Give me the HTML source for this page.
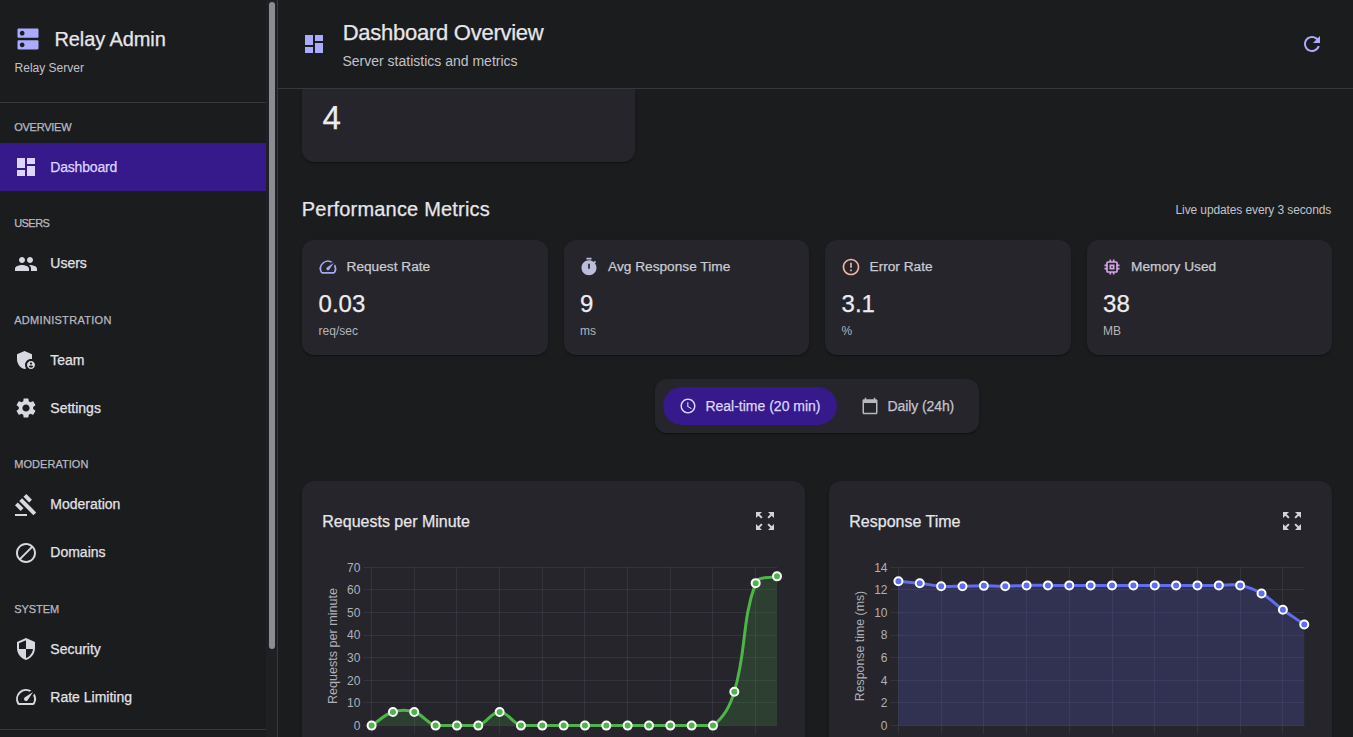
<!DOCTYPE html>
<html><head><meta charset="utf-8"><title>Relay Admin</title>
<style>
html,body{margin:0;padding:0;width:1353px;height:737px;overflow:hidden;background:#1b1c1e;font-family:"Liberation Sans",sans-serif;}
.t{position:absolute;white-space:nowrap;line-height:1;}
.r{position:absolute;}
.i{position:absolute;display:block;overflow:visible;}
.rt{transform:translate(-50%,-50%) rotate(-90deg);}
</style></head><body>
<svg class="i" style="left:14.00px;top:24.70px;width:28px;height:28px" viewBox="0 0 24 24"><path fill="#aaaaff" d="M20 13H4c-.55 0-1 .45-1 1v6c0 .55.45 1 1 1h16c.55 0 1-.45 1-1v-6c0-.55-.45-1-1-1M7 19c-1.1 0-2-.9-2-2s.9-2 2-2 2 .9 2 2-.9 2-2 2M20 3H4c-.55 0-1 .45-1 1v6c0 .55.45 1 1 1h16c.55 0 1-.45 1-1V4c0-.55-.45-1-1-1M7 9c-1.1 0-2-.9-2-2s.9-2 2-2 2 .9 2 2-.9 2-2 2"/></svg>
<div class="t" style="left:54.50px;top:29.32px;font-size:20px;color:#e6e6ea;font-weight:500;letter-spacing:-0.1px;-webkit-text-stroke:0.25px #e6e6ea;">Relay Admin</div>
<div class="t" style="left:14.60px;top:62.09px;font-size:12px;color:#c2c2ca;">Relay Server</div>
<div class="r" style="left:0px;top:102px;width:266px;height:1px;background:#38373f;"></div>
<div class="t" style="left:14.20px;top:121.94px;font-size:11px;color:#b9b9c2;font-weight:500;letter-spacing:-0.25px;-webkit-text-stroke:0.1px #b9b9c2;-webkit-text-stroke:0.25px #b9b9c2;">OVERVIEW</div>
<div class="t" style="left:14.20px;top:217.94px;font-size:11px;color:#b9b9c2;font-weight:500;letter-spacing:-0.5499999999999999px;-webkit-text-stroke:0.1px #b9b9c2;-webkit-text-stroke:0.25px #b9b9c2;">USERS</div>
<div class="t" style="left:14.20px;top:314.94px;font-size:11px;color:#b9b9c2;font-weight:500;letter-spacing:0.3px;-webkit-text-stroke:0.1px #b9b9c2;-webkit-text-stroke:0.25px #b9b9c2;">ADMINISTRATION</div>
<div class="t" style="left:14.20px;top:458.94px;font-size:11px;color:#b9b9c2;font-weight:500;letter-spacing:0.05px;-webkit-text-stroke:0.1px #b9b9c2;-webkit-text-stroke:0.25px #b9b9c2;">MODERATION</div>
<div class="t" style="left:14.20px;top:603.94px;font-size:11px;color:#b9b9c2;font-weight:500;letter-spacing:-0.05px;-webkit-text-stroke:0.1px #b9b9c2;-webkit-text-stroke:0.25px #b9b9c2;">SYSTEM</div>
<div class="r" style="left:0px;top:143px;width:266px;height:48px;background:#36198a;"></div>
<svg class="i" style="left:14.00px;top:155.00px;width:24px;height:24px" viewBox="0 0 24 24"><path fill="#dcd6ff" d="M3 13h8V3H3zm0 8h8v-6H3zm10 0h8V11h-8zm0-18v6h8V3z"/></svg>
<div class="t" style="left:50.30px;top:160.40px;font-size:14px;color:#dcd6ff;font-weight:500;letter-spacing:-0.19px;-webkit-text-stroke:0.25px #dcd6ff;">Dashboard</div>
<svg class="i" style="left:14.00px;top:252.00px;width:24px;height:24px" viewBox="0 0 24 24"><path fill="#d8d8e0" d="M16 11c1.66 0 2.99-1.34 2.99-3S17.66 5 16 5c-1.66 0-3 1.34-3 3s1.34 3 3 3m-8 0c1.66 0 2.99-1.34 2.99-3S9.66 5 8 5C6.34 5 5 6.34 5 8s1.34 3 3 3m0 2c-2.33 0-7 1.17-7 3.5V19h14v-2.5c0-2.33-4.67-3.5-7-3.5m8 0c-.29 0-.62.02-.97.05 1.16.84 1.97 1.97 1.97 3.45V19h6v-2.5c0-2.33-4.67-3.5-7-3.5"/></svg>
<div class="t" style="left:50.30px;top:256.40px;font-size:14px;color:#e2e2e8;font-weight:500;-webkit-text-stroke:0.25px #e2e2e8;">Users</div>
<svg class="i" style="left:14.00px;top:348.00px;width:24px;height:24px" viewBox="0 0 24 24"><path fill="#d8d8e0" d="M17 11c.34 0 .67.04 1 .09V6.27L10.5 3 3 6.27v4.91c0 4.54 3.2 8.79 7.5 9.82.55-.13 1.08-.32 1.6-.55-.69-.98-1.1-2.17-1.1-3.45 0-3.31 2.69-6 6-6M17 13c-2.21 0-4 1.79-4 4s1.79 4 4 4 4-1.79 4-4-1.79-4-4-4m0 1.38c.62 0 1.12.51 1.12 1.12s-.51 1.12-1.12 1.12-1.12-.51-1.12-1.12.5-1.12 1.12-1.12m0 5.37c-.93 0-1.74-.46-2.24-1.17.05-.72 1.51-1.08 2.24-1.08s2.19.36 2.24 1.08c-.5.71-1.31 1.17-2.24 1.17"/></svg>
<div class="t" style="left:50.30px;top:353.40px;font-size:14px;color:#e2e2e8;font-weight:500;-webkit-text-stroke:0.25px #e2e2e8;">Team</div>
<svg class="i" style="left:14.00px;top:396.00px;width:24px;height:24px" viewBox="0 0 24 24"><path fill="#d8d8e0" d="M19.14 12.94c.04-.3.06-.61.06-.94 0-.32-.02-.64-.07-.94l2.03-1.58c.18-.14.23-.41.12-.61l-1.92-3.32c-.12-.22-.37-.29-.59-.22l-2.39.96c-.5-.38-1.03-.7-1.62-.94l-.36-2.54c-.04-.24-.24-.41-.48-.41h-3.84c-.24 0-.43.17-.47.41l-.36 2.54c-.59.24-1.13.57-1.62.94l-2.39-.96c-.22-.08-.47 0-.59.22L2.74 8.87c-.12.21-.08.47.12.61l2.03 1.58c-.05.3-.09.63-.09.94s.02.64.07.94l-2.03 1.58c-.18.14-.23.41-.12.61l1.92 3.32c.12.22.37.29.59.22l2.39-.96c.5.38 1.03.7 1.62.94l.36 2.54c.05.24.24.41.48.41h3.84c.24 0 .44-.17.47-.41l.36-2.54c.59-.24 1.13-.56 1.62-.94l2.39.96c.22.08.47 0 .59-.22l1.92-3.32c.12-.22.07-.47-.12-.61zM12 15.6c-1.98 0-3.6-1.62-3.6-3.6s1.62-3.6 3.6-3.6 3.6 1.62 3.6 3.6-1.62 3.6-3.6 3.6"/></svg>
<div class="t" style="left:50.30px;top:401.40px;font-size:14px;color:#e2e2e8;font-weight:500;-webkit-text-stroke:0.25px #e2e2e8;">Settings</div>
<svg class="i" style="left:14.00px;top:493.00px;width:24px;height:24px" viewBox="0 0 24 24"><path fill="#d8d8e0" d="M1 21h12v2H1zM5.245 8.07l2.83-2.827 14.14 14.142-2.828 2.828zM12.317 1l5.657 5.656-2.83 2.83-5.654-5.66zM3.825 9.485l5.657 5.657-2.828 2.828-5.657-5.657z"/></svg>
<div class="t" style="left:50.30px;top:497.40px;font-size:14px;color:#e2e2e8;font-weight:500;-webkit-text-stroke:0.25px #e2e2e8;">Moderation</div>
<svg class="i" style="left:14.00px;top:541.00px;width:24px;height:24px" viewBox="0 0 24 24"><path fill="#d8d8e0" d="M12 2C6.48 2 2 6.48 2 12s4.48 10 10 10 10-4.48 10-10S17.52 2 12 2M4 12c0-4.42 3.58-8 8-8 1.85 0 3.55.63 4.9 1.69L5.69 16.9C4.63 15.55 4 13.85 4 12m8 8c-1.85 0-3.55-.63-4.9-1.69L18.31 7.1C19.37 8.45 20 10.15 20 12c0 4.42-3.58 8-8 8"/></svg>
<div class="t" style="left:50.30px;top:545.40px;font-size:14px;color:#e2e2e8;font-weight:500;-webkit-text-stroke:0.25px #e2e2e8;">Domains</div>
<svg class="i" style="left:14.00px;top:637.00px;width:24px;height:24px" viewBox="0 0 24 24"><path fill="#d8d8e0" d="M12 1 3 5v6c0 5.55 3.84 10.74 9 12 5.16-1.26 9-6.45 9-12V5zm0 10.99h7c-.53 4.12-3.28 7.79-7 8.94V12H5V6.3l7-3.11z"/></svg>
<div class="t" style="left:50.30px;top:642.40px;font-size:14px;color:#e2e2e8;font-weight:500;-webkit-text-stroke:0.25px #e2e2e8;">Security</div>
<svg class="i" style="left:14.00px;top:685.00px;width:24px;height:24px" viewBox="0 0 24 24"><path fill="#d8d8e0" d="m20.38 8.57-1.23 1.85a8 8 0 0 1-.22 7.58H5.07A8 8 0 0 1 15.58 6.85l1.85-1.23A10 10 0 0 0 3.35 19a2 2 0 0 0 1.72 1h13.85a2 2 0 0 0 1.74-1 10 10 0 0 0-.27-10.44zm-9.79 6.84a2 2 0 0 0 2.83 0l5.66-8.49-8.49 5.66a2 2 0 0 0 0 2.83"/></svg>
<div class="t" style="left:50.30px;top:690.40px;font-size:14px;color:#e2e2e8;font-weight:500;-webkit-text-stroke:0.25px #e2e2e8;">Rate Limiting</div>
<div class="r" style="left:0px;top:729px;width:266px;height:1px;background:#38373f;"></div>
<div class="r" style="left:266px;top:0px;width:11px;height:737px;background:#202024;"></div>
<div class="r" style="left:269px;top:2px;width:6px;height:647px;background:#8b8b94;border-radius:3px;"></div>
<div class="r" style="left:277px;top:0px;width:1px;height:737px;background:#38373f;"></div>
<div class="r" style="left:302px;top:40px;width:333px;height:122px;background:#25252b;border-radius:12px;box-shadow:0 2px 1px -1px rgba(0,0,0,.2),0 1px 1px 0 rgba(0,0,0,.14),0 1px 3px 0 rgba(0,0,0,.12);"></div>
<div class="t" style="left:322.50px;top:101.31px;font-size:33px;color:#ececf0;font-weight:500;-webkit-text-stroke:0.25px #ececf0;">4</div>
<div class="t" style="left:301.80px;top:199.32px;font-size:20px;color:#e6e6ea;font-weight:500;letter-spacing:0.19px;-webkit-text-stroke:0.25px #e6e6ea;">Performance Metrics</div>
<div class="t" style="right:21.70px;top:204.09px;font-size:12px;color:#c2c2ca;letter-spacing:-0.11px;margin-right:0.11px;">Live updates every 3 seconds</div>
<div class="r" style="left:302px;top:240px;width:245.5px;height:115px;background:#25252b;border-radius:12px;box-shadow:0 2px 1px -1px rgba(0,0,0,.2),0 1px 1px 0 rgba(0,0,0,.14),0 1px 3px 0 rgba(0,0,0,.12);"></div>
<svg class="i" style="left:317.50px;top:257.00px;width:20px;height:20px" viewBox="0 0 24 24"><path fill="#a6a8f2" d="m20.38 8.57-1.23 1.85a8 8 0 0 1-.22 7.58H5.07A8 8 0 0 1 15.58 6.85l1.85-1.23A10 10 0 0 0 3.35 19a2 2 0 0 0 1.72 1h13.85a2 2 0 0 0 1.74-1 10 10 0 0 0-.27-10.44zm-9.79 6.84a2 2 0 0 0 2.83 0l5.66-8.49-8.49 5.66a2 2 0 0 0 0 2.83"/></svg>
<div class="t" style="left:346.50px;top:259.65px;font-size:13.7px;color:#cacad2;font-weight:500;-webkit-text-stroke:0.25px #cacad2;">Request Rate</div>
<div class="t" style="left:318.60px;top:291.93px;font-size:24px;color:#ececf0;font-weight:500;-webkit-text-stroke:0.25px #ececf0;">0.03</div>
<div class="t" style="left:318.60px;top:325.09px;font-size:12px;color:#b4b4bc;">req/sec</div>
<div class="r" style="left:563.5px;top:240px;width:245.5px;height:115px;background:#25252b;border-radius:12px;box-shadow:0 2px 1px -1px rgba(0,0,0,.2),0 1px 1px 0 rgba(0,0,0,.14),0 1px 3px 0 rgba(0,0,0,.12);"></div>
<svg class="i" style="left:579.00px;top:257.00px;width:20px;height:20px" viewBox="0 0 24 24"><path fill="#bcbcdc" d="M9 1h6v2H9zm10.03 6.39 1.42-1.42c-.43-.51-.9-.99-1.41-1.41l-1.42 1.42C16.07 4.74 14.12 4 12 4c-4.97 0-9 4.03-9 9s4.02 9 9 9 9-4.03 9-9c0-2.12-.74-4.07-1.97-5.61M13 14h-2V8h2z"/></svg>
<div class="t" style="left:608.00px;top:259.65px;font-size:13.7px;color:#cacad2;font-weight:500;-webkit-text-stroke:0.25px #cacad2;">Avg Response Time</div>
<div class="t" style="left:580.10px;top:291.93px;font-size:24px;color:#ececf0;font-weight:500;-webkit-text-stroke:0.25px #ececf0;">9</div>
<div class="t" style="left:580.10px;top:325.09px;font-size:12px;color:#b4b4bc;">ms</div>
<div class="r" style="left:825px;top:240px;width:245.5px;height:115px;background:#25252b;border-radius:12px;box-shadow:0 2px 1px -1px rgba(0,0,0,.2),0 1px 1px 0 rgba(0,0,0,.14),0 1px 3px 0 rgba(0,0,0,.12);"></div>
<svg class="i" style="left:840.50px;top:257.00px;width:20px;height:20px" viewBox="0 0 24 24"><path fill="#f0b4a4" d="M11 15h2v2h-2zm0-8h2v6h-2zm.99-5C6.47 2 2 6.48 2 12s4.47 10 9.99 10C17.52 22 22 17.52 22 12S17.52 2 11.99 2M12 20c-4.42 0-8-3.58-8-8s3.58-8 8-8 8 3.58 8 8-3.58 8-8 8"/></svg>
<div class="t" style="left:869.50px;top:259.65px;font-size:13.7px;color:#cacad2;font-weight:500;-webkit-text-stroke:0.25px #cacad2;">Error Rate</div>
<div class="t" style="left:841.60px;top:291.93px;font-size:24px;color:#ececf0;font-weight:500;-webkit-text-stroke:0.25px #ececf0;">3.1</div>
<div class="t" style="left:841.60px;top:325.09px;font-size:12px;color:#b4b4bc;">%</div>
<div class="r" style="left:1086.5px;top:240px;width:245.5px;height:115px;background:#25252b;border-radius:12px;box-shadow:0 2px 1px -1px rgba(0,0,0,.2),0 1px 1px 0 rgba(0,0,0,.14),0 1px 3px 0 rgba(0,0,0,.12);"></div>
<svg class="i" style="left:1102.00px;top:257.00px;width:20px;height:20px" viewBox="0 0 24 24"><path fill="#d6a6e6" d="M15 9H9v6h6zm-2 4h-2v-2h2zm8-2V9h-2V7c0-1.1-.9-2-2-2h-2V3h-2v2h-2V3H9v2H7c-1.1 0-2 .9-2 2v2H3v2h2v2H3v2h2v2c0 1.1.9 2 2 2h2v2h2v-2h2v2h2v-2h2c1.1 0 2-.9 2-2v-2h2v-2h-2v-2zm-4 6H7V7h10z"/></svg>
<div class="t" style="left:1131.00px;top:259.65px;font-size:13.7px;color:#cacad2;font-weight:500;-webkit-text-stroke:0.25px #cacad2;">Memory Used</div>
<div class="t" style="left:1103.10px;top:291.93px;font-size:24px;color:#ececf0;font-weight:500;-webkit-text-stroke:0.25px #ececf0;">38</div>
<div class="t" style="left:1103.10px;top:325.09px;font-size:12px;color:#b4b4bc;">MB</div>
<div class="r" style="left:655px;top:379px;width:324px;height:54px;background:#25252b;border-radius:12px;box-shadow:0 2px 1px -1px rgba(0,0,0,.2),0 1px 1px 0 rgba(0,0,0,.14),0 1px 3px 0 rgba(0,0,0,.12);"></div>
<div class="r" style="left:663px;top:387px;width:174px;height:38px;background:#36198a;border-radius:19px;"></div>
<svg class="i" style="left:679.00px;top:397.00px;width:18px;height:18px" viewBox="0 0 24 24"><path fill="#dcd6ff" d="M11.99 2C6.47 2 2 6.48 2 12s4.47 10 9.99 10C17.52 22 22 17.52 22 12S17.52 2 11.99 2M12 20c-4.42 0-8-3.58-8-8s3.58-8 8-8 8 3.58 8 8-3.58 8-8 8m.5-13H11v6l5.25 3.15.75-1.23-4.5-2.67z"/></svg>
<div class="t" style="left:705.40px;top:399.40px;font-size:14px;color:#dcd6ff;font-weight:500;-webkit-text-stroke:0.25px #dcd6ff;">Real-time (20 min)</div>
<svg class="i" style="left:861.30px;top:397.00px;width:18px;height:18px" viewBox="0 0 24 24"><path fill="#b8b8c0" d="M20 3h-1V1h-2v2H7V1H5v2H4c-1.1 0-2 .9-2 2v16c0 1.1.9 2 2 2h16c1.1 0 2-.9 2-2V5c0-1.1-.9-2-2-2m0 18H4V8h16z"/></svg>
<div class="t" style="left:887.60px;top:399.40px;font-size:14px;color:#c4c4cc;font-weight:500;letter-spacing:-0.1px;-webkit-text-stroke:0.25px #c4c4cc;">Daily (24h)</div>
<div class="r" style="left:302px;top:481px;width:503px;height:299px;background:#25252b;border-radius:12px;box-shadow:0 2px 1px -1px rgba(0,0,0,.2),0 1px 1px 0 rgba(0,0,0,.14),0 1px 3px 0 rgba(0,0,0,.12);"></div>
<div class="t" style="left:322.30px;top:513.70px;font-size:16px;color:#e6e6ea;font-weight:500;-webkit-text-stroke:0.25px #e6e6ea;">Requests per Minute</div>
<svg class="i" style="left:753.00px;top:508.60px;width:24px;height:24px" viewBox="0 0 24 24"><path fill="#d2d2da" d="m15 3 2.3 2.3-2.89 2.87 1.42 1.42L18.7 6.7 21 9V3zM3 9l2.3-2.3 2.87 2.89 1.42-1.42L6.7 5.3 9 3H3zm6 12-2.3-2.3 2.89-2.87-1.42-1.42L5.3 17.3 3 15v6zm12-6-2.3 2.3-2.87-2.89-1.42 1.42 2.89 2.87L15 21h6z"/></svg>
<div class="r" style="left:829px;top:481px;width:503px;height:299px;background:#25252b;border-radius:12px;box-shadow:0 2px 1px -1px rgba(0,0,0,.2),0 1px 1px 0 rgba(0,0,0,.14),0 1px 3px 0 rgba(0,0,0,.12);"></div>
<div class="t" style="left:849.30px;top:513.70px;font-size:16px;color:#e6e6ea;font-weight:500;-webkit-text-stroke:0.25px #e6e6ea;">Response Time</div>
<svg class="i" style="left:1280.00px;top:508.60px;width:24px;height:24px" viewBox="0 0 24 24"><path fill="#d2d2da" d="m15 3 2.3 2.3-2.89 2.87 1.42 1.42L18.7 6.7 21 9V3zM3 9l2.3-2.3 2.87 2.89 1.42-1.42L6.7 5.3 9 3H3zm6 12-2.3-2.3 2.89-2.87-1.42-1.42L5.3 17.3 3 15v6zm12-6-2.3 2.3-2.87-2.89-1.42 1.42 2.89 2.87L15 21h6z"/></svg>
<svg class="i" style="left:0;top:0;width:1353px;height:737px" viewBox="0 0 1353 737"><path d="M363.6,725.5H777.00M363.6,702.5H777.00M363.6,680.5H777.00M363.6,657.5H777.00M363.6,635.5H777.00M363.6,612.5H777.00M363.6,589.5H777.00M363.6,567.5H777.00M371.5,567.30V733.60M414.5,567.30V733.60M456.5,567.30V733.60M499.5,567.30V733.60M542.5,567.30V733.60M584.5,567.30V733.60M627.5,567.30V733.60M670.5,567.30V733.60M712.5,567.30V733.60M755.5,567.30V733.60" stroke="rgba(160,155,205,0.12)" stroke-width="1" fill="none"/><path d="M371.60,725.60C380.13,720.17 383.68,714.97 392.94,712.03C400.75,709.55 406.46,709.55 414.27,712.03C423.53,714.97 426.35,722.66 435.61,725.60C443.42,725.60 448.41,725.60 456.95,725.60C465.48,725.60 470.47,725.60 478.28,725.60C487.54,722.66 491.09,712.03 499.62,712.03C508.16,712.03 511.70,722.66 520.96,725.60C528.77,725.60 533.76,725.60 542.29,725.60C550.83,725.60 555.10,725.60 563.63,725.60C572.17,725.60 576.43,725.60 584.97,725.60C593.50,725.60 597.77,725.60 606.31,725.60C614.84,725.60 619.11,725.60 627.64,725.60C636.18,725.60 640.44,725.60 648.98,725.60C657.51,725.60 661.78,725.60 670.32,725.60C678.85,725.60 683.12,725.60 691.65,725.60C700.19,725.60 707.06,725.60 712.99,725.60C724.13,716.75 729.79,706.83 734.33,691.68C746.86,649.84 741.47,621.50 755.66,583.13C758.54,575.36 768.47,579.06 777.00,576.35L777.00,725.60L371.60,725.60Z" fill="rgba(76,183,72,0.18)"/><path d="M371.60,725.60C380.13,720.17 383.68,714.97 392.94,712.03C400.75,709.55 406.46,709.55 414.27,712.03C423.53,714.97 426.35,722.66 435.61,725.60C443.42,725.60 448.41,725.60 456.95,725.60C465.48,725.60 470.47,725.60 478.28,725.60C487.54,722.66 491.09,712.03 499.62,712.03C508.16,712.03 511.70,722.66 520.96,725.60C528.77,725.60 533.76,725.60 542.29,725.60C550.83,725.60 555.10,725.60 563.63,725.60C572.17,725.60 576.43,725.60 584.97,725.60C593.50,725.60 597.77,725.60 606.31,725.60C614.84,725.60 619.11,725.60 627.64,725.60C636.18,725.60 640.44,725.60 648.98,725.60C657.51,725.60 661.78,725.60 670.32,725.60C678.85,725.60 683.12,725.60 691.65,725.60C700.19,725.60 707.06,725.60 712.99,725.60C724.13,716.75 729.79,706.83 734.33,691.68C746.86,649.84 741.47,621.50 755.66,583.13C758.54,575.36 768.47,579.06 777.00,576.35" stroke="#4cb748" stroke-width="3" fill="none"/><circle cx="371.60" cy="725.60" r="4" fill="#4cb748" stroke="#fff" stroke-width="2"/><circle cx="392.94" cy="712.03" r="4" fill="#4cb748" stroke="#fff" stroke-width="2"/><circle cx="414.27" cy="712.03" r="4" fill="#4cb748" stroke="#fff" stroke-width="2"/><circle cx="435.61" cy="725.60" r="4" fill="#4cb748" stroke="#fff" stroke-width="2"/><circle cx="456.95" cy="725.60" r="4" fill="#4cb748" stroke="#fff" stroke-width="2"/><circle cx="478.28" cy="725.60" r="4" fill="#4cb748" stroke="#fff" stroke-width="2"/><circle cx="499.62" cy="712.03" r="4" fill="#4cb748" stroke="#fff" stroke-width="2"/><circle cx="520.96" cy="725.60" r="4" fill="#4cb748" stroke="#fff" stroke-width="2"/><circle cx="542.29" cy="725.60" r="4" fill="#4cb748" stroke="#fff" stroke-width="2"/><circle cx="563.63" cy="725.60" r="4" fill="#4cb748" stroke="#fff" stroke-width="2"/><circle cx="584.97" cy="725.60" r="4" fill="#4cb748" stroke="#fff" stroke-width="2"/><circle cx="606.31" cy="725.60" r="4" fill="#4cb748" stroke="#fff" stroke-width="2"/><circle cx="627.64" cy="725.60" r="4" fill="#4cb748" stroke="#fff" stroke-width="2"/><circle cx="648.98" cy="725.60" r="4" fill="#4cb748" stroke="#fff" stroke-width="2"/><circle cx="670.32" cy="725.60" r="4" fill="#4cb748" stroke="#fff" stroke-width="2"/><circle cx="691.65" cy="725.60" r="4" fill="#4cb748" stroke="#fff" stroke-width="2"/><circle cx="712.99" cy="725.60" r="4" fill="#4cb748" stroke="#fff" stroke-width="2"/><circle cx="734.33" cy="691.68" r="4" fill="#4cb748" stroke="#fff" stroke-width="2"/><circle cx="755.66" cy="583.13" r="4" fill="#4cb748" stroke="#fff" stroke-width="2"/><circle cx="777.00" cy="576.35" r="4" fill="#4cb748" stroke="#fff" stroke-width="2"/><path d="M890.4,725.5H1304.26M890.4,702.5H1304.26M890.4,680.5H1304.26M890.4,657.5H1304.26M890.4,635.5H1304.26M890.4,612.5H1304.26M890.4,589.5H1304.26M890.4,567.5H1304.26M898.5,567.30V733.60M941.5,567.30V733.60M983.5,567.30V733.60M1026.5,567.30V733.60M1069.5,567.30V733.60M1112.5,567.30V733.60M1154.5,567.30V733.60M1197.5,567.30V733.60M1240.5,567.30V733.60M1282.5,567.30V733.60" stroke="rgba(160,155,205,0.12)" stroke-width="1" fill="none"/><path d="M898.40,581.21C906.94,582.02 911.24,582.25 919.76,583.24C928.33,584.24 932.54,585.59 941.12,586.18C949.63,586.77 953.94,586.25 962.48,586.18C971.03,586.12 975.30,585.84 983.84,585.84C992.39,585.84 996.66,586.27 1005.21,586.18C1013.75,586.09 1018.02,585.55 1026.57,585.39C1035.11,585.23 1039.38,585.39 1047.93,585.39C1056.47,585.39 1060.74,585.39 1069.29,585.39C1077.83,585.39 1082.11,585.39 1090.65,585.39C1099.19,585.39 1103.47,585.39 1112.01,585.39C1120.55,585.39 1124.83,585.39 1133.37,585.39C1141.92,585.39 1146.19,585.39 1154.73,585.39C1163.28,585.39 1167.55,585.39 1176.09,585.39C1184.64,585.39 1188.91,585.39 1197.45,585.39C1206.00,585.39 1210.27,585.39 1218.82,585.39C1227.36,585.39 1231.91,583.84 1240.18,585.39C1249.00,587.05 1253.69,588.95 1261.54,593.42C1270.78,598.68 1274.21,603.38 1282.90,609.70C1291.30,615.82 1295.72,618.59 1304.26,624.51L1304.26,725.60L898.40,725.60Z" fill="rgba(99,102,241,0.2)"/><path d="M898.40,581.21C906.94,582.02 911.24,582.25 919.76,583.24C928.33,584.24 932.54,585.59 941.12,586.18C949.63,586.77 953.94,586.25 962.48,586.18C971.03,586.12 975.30,585.84 983.84,585.84C992.39,585.84 996.66,586.27 1005.21,586.18C1013.75,586.09 1018.02,585.55 1026.57,585.39C1035.11,585.23 1039.38,585.39 1047.93,585.39C1056.47,585.39 1060.74,585.39 1069.29,585.39C1077.83,585.39 1082.11,585.39 1090.65,585.39C1099.19,585.39 1103.47,585.39 1112.01,585.39C1120.55,585.39 1124.83,585.39 1133.37,585.39C1141.92,585.39 1146.19,585.39 1154.73,585.39C1163.28,585.39 1167.55,585.39 1176.09,585.39C1184.64,585.39 1188.91,585.39 1197.45,585.39C1206.00,585.39 1210.27,585.39 1218.82,585.39C1227.36,585.39 1231.91,583.84 1240.18,585.39C1249.00,587.05 1253.69,588.95 1261.54,593.42C1270.78,598.68 1274.21,603.38 1282.90,609.70C1291.30,615.82 1295.72,618.59 1304.26,624.51" stroke="#5f6cf4" stroke-width="3" fill="none"/><circle cx="898.40" cy="581.21" r="4" fill="#5f6cf4" stroke="#fff" stroke-width="2"/><circle cx="919.76" cy="583.24" r="4" fill="#5f6cf4" stroke="#fff" stroke-width="2"/><circle cx="941.12" cy="586.18" r="4" fill="#5f6cf4" stroke="#fff" stroke-width="2"/><circle cx="962.48" cy="586.18" r="4" fill="#5f6cf4" stroke="#fff" stroke-width="2"/><circle cx="983.84" cy="585.84" r="4" fill="#5f6cf4" stroke="#fff" stroke-width="2"/><circle cx="1005.21" cy="586.18" r="4" fill="#5f6cf4" stroke="#fff" stroke-width="2"/><circle cx="1026.57" cy="585.39" r="4" fill="#5f6cf4" stroke="#fff" stroke-width="2"/><circle cx="1047.93" cy="585.39" r="4" fill="#5f6cf4" stroke="#fff" stroke-width="2"/><circle cx="1069.29" cy="585.39" r="4" fill="#5f6cf4" stroke="#fff" stroke-width="2"/><circle cx="1090.65" cy="585.39" r="4" fill="#5f6cf4" stroke="#fff" stroke-width="2"/><circle cx="1112.01" cy="585.39" r="4" fill="#5f6cf4" stroke="#fff" stroke-width="2"/><circle cx="1133.37" cy="585.39" r="4" fill="#5f6cf4" stroke="#fff" stroke-width="2"/><circle cx="1154.73" cy="585.39" r="4" fill="#5f6cf4" stroke="#fff" stroke-width="2"/><circle cx="1176.09" cy="585.39" r="4" fill="#5f6cf4" stroke="#fff" stroke-width="2"/><circle cx="1197.45" cy="585.39" r="4" fill="#5f6cf4" stroke="#fff" stroke-width="2"/><circle cx="1218.82" cy="585.39" r="4" fill="#5f6cf4" stroke="#fff" stroke-width="2"/><circle cx="1240.18" cy="585.39" r="4" fill="#5f6cf4" stroke="#fff" stroke-width="2"/><circle cx="1261.54" cy="593.42" r="4" fill="#5f6cf4" stroke="#fff" stroke-width="2"/><circle cx="1282.90" cy="609.70" r="4" fill="#5f6cf4" stroke="#fff" stroke-width="2"/><circle cx="1304.26" cy="624.51" r="4" fill="#5f6cf4" stroke="#fff" stroke-width="2"/></svg>
<div class="t" style="right:992.70px;top:720.09px;font-size:12px;color:#b0b0b8;">0</div>
<div class="t" style="right:465.50px;top:720.09px;font-size:12px;color:#b0b0b8;">0</div>
<div class="t" style="right:992.70px;top:697.09px;font-size:12px;color:#b0b0b8;">10</div>
<div class="t" style="right:465.50px;top:697.09px;font-size:12px;color:#b0b0b8;">2</div>
<div class="t" style="right:992.70px;top:675.09px;font-size:12px;color:#b0b0b8;">20</div>
<div class="t" style="right:465.50px;top:675.09px;font-size:12px;color:#b0b0b8;">4</div>
<div class="t" style="right:992.70px;top:652.09px;font-size:12px;color:#b0b0b8;">30</div>
<div class="t" style="right:465.50px;top:652.09px;font-size:12px;color:#b0b0b8;">6</div>
<div class="t" style="right:992.70px;top:629.09px;font-size:12px;color:#b0b0b8;">40</div>
<div class="t" style="right:465.50px;top:629.09px;font-size:12px;color:#b0b0b8;">8</div>
<div class="t" style="right:992.70px;top:607.09px;font-size:12px;color:#b0b0b8;">50</div>
<div class="t" style="right:465.50px;top:607.09px;font-size:12px;color:#b0b0b8;">10</div>
<div class="t" style="right:992.70px;top:584.09px;font-size:12px;color:#b0b0b8;">60</div>
<div class="t" style="right:465.50px;top:584.09px;font-size:12px;color:#b0b0b8;">12</div>
<div class="t" style="right:992.70px;top:562.09px;font-size:12px;color:#b0b0b8;">70</div>
<div class="t" style="right:465.50px;top:562.09px;font-size:12px;color:#b0b0b8;">14</div>
<div class="t rt" style="left:332.8px;top:646.0px;font-size:12.6px;color:#b0b0b8">Requests per minute</div>
<div class="t rt" style="left:860.3px;top:646.2px;font-size:12.35px;color:#b0b0b8">Response time (ms)</div>
<div class="r" style="left:278px;top:0px;width:1075px;height:88px;background:#1b1c1e;"></div>
<div class="r" style="left:278px;top:88px;width:1075px;height:1px;background:#38373f;"></div>
<svg class="i" style="left:302.00px;top:32.00px;width:24px;height:24px" viewBox="0 0 24 24"><path fill="#aaaaff" d="M3 13h8V3H3zm0 8h8v-6H3zm10 0h8V11h-8zm0-18v6h8V3z"/></svg>
<div class="t" style="left:342.70px;top:21.62px;font-size:22px;color:#e6e6ea;font-weight:500;letter-spacing:-0.26px;-webkit-text-stroke:0.25px #e6e6ea;">Dashboard Overview</div>
<div class="t" style="left:342.50px;top:54.40px;font-size:14px;color:#c2c2ca;">Server statistics and metrics</div>
<svg class="i" style="left:1300.00px;top:32.00px;width:24px;height:24px" viewBox="0 0 24 24"><path fill="#aaaaff" d="M17.65 6.35C16.2 4.9 14.21 4 12 4c-4.42 0-7.99 3.58-7.99 8s3.57 8 7.99 8c3.73 0 6.84-2.55 7.73-6h-2.08c-.82 2.33-3.04 4-5.65 4-3.31 0-6-2.69-6-6s2.69-6 6-6c1.66 0 3.14.69 4.22 1.78L13 11h7V4z"/></svg>
</body></html>
